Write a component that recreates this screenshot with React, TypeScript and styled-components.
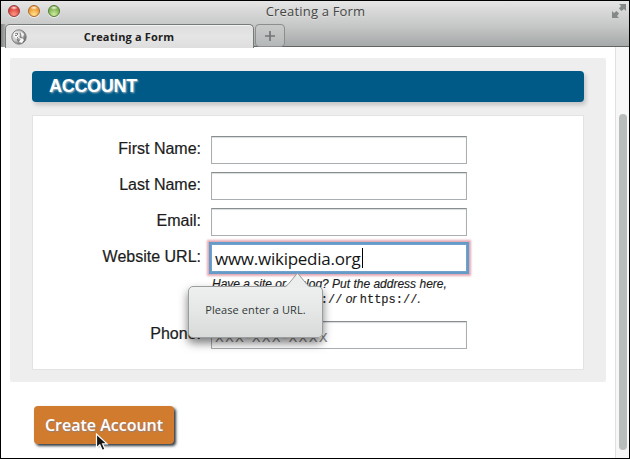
import React from "react";
import styled, { createGlobalStyle } from "styled-components";

const GlobalStyle = createGlobalStyle`
  *, *::before, *::after { box-sizing: border-box; }
  body { margin: 0; background: #fff; overflow: hidden; }
`;

const human = `"Open Sans", "Noto Sans", sans-serif`;
const arial = `"Liberation Sans", Arial, sans-serif`;

const BrowserWindow = styled.div`
  position: relative;
  width: 630px;
  height: 459px;
  border: 1px solid #000;
  display: flex;
  flex-direction: column;
  overflow: hidden;
  background: #fff;
  font-family: ${arial};
  color: #1c1c1c;
`;

const Chrome = styled.header`
  flex: none;
  height: 46px;
  display: flex;
  flex-direction: column;
  border-bottom: 1px solid #626464;
  background: linear-gradient(#e6e6e6 0, #d8d8d8 10px, #c6c7c7 25px, #a6a9a9 45px);
`;

const TitleBar = styled.div`
  height: 23px;
  flex: none;
  display: grid;
  grid-template-columns: 57px 1fr 60px;
  padding: 0 3px 0 7px;
`;

const Lights = styled.div`
  display: flex;
  gap: 8px;
  padding-top: 4px;
`;

const Light = styled.span<{ $edge: string; $fill: string; $glow: string }>`
  width: 12px;
  height: 12px;
  border-radius: 50%;
  border: 1px solid ${(p) => p.$edge};
  background: radial-gradient(ellipse 4px 2px at 50% 18%, #ffffffe8, #ffffff00),
    radial-gradient(circle at 50% 85%, ${(p) => p.$glow}, ${(p) => p.$fill} 65%);
  box-shadow: 0 1px 0 #eee;
`;

const Title = styled.div`
  font: 500 13px/21px ${human};
  color: #454545;
  white-space: nowrap;
  text-align: center;
  letter-spacing: 0.18px;
  text-shadow: 0 1px 0 #eeeeee90;
`;

const ExpandSlot = styled.div`
  display: flex;
  justify-content: flex-end;
  padding-top: 3px;
`;

const Tabs = styled.div`
  height: 23px;
  flex: none;
  display: flex;
  padding-left: 4px;
  background: linear-gradient(90deg, #858787 0, #a9abab 4px, transparent 5px);
`;

const Tab = styled.div`
  width: 249px;
  height: 24px;
  display: grid;
  grid-template-columns: 18px 1fr 24px;
  align-items: center;
  padding-left: 5px;
  border: 1px solid #777a7a;
  border-bottom: 0;
  border-radius: 5px 5px 0 0;
  background: linear-gradient(#dedede, #e5e5e5 50%, #dedede);
  box-shadow: inset 0 1px 0 #f4f4f4;
`;

const TabTitle = styled.span`
  font: bold 11px/22px ${human};
  letter-spacing: 0.18px;
  text-align: center;
  white-space: nowrap;
  color: #202020;
`;

const NewTab = styled.div`
  width: 30px;
  height: 23px;
  margin-left: 1px;
  display: flex;
  align-items: center;
  justify-content: center;
  border: 1px solid #8b8e8e;
  border-radius: 4px;
  background: linear-gradient(#c9cbcb, #b5b8b8);
`;

const Viewport = styled.div`
  flex: 1;
  min-height: 0;
  display: flex;
`;

const Page = styled.main`
  flex: 1;
  min-width: 0;
  padding: 11px 9px 0;
`;

const ScrollTrack = styled.div`
  width: 14px;
  padding: 67px 0 0 3px;
  background: #f7f7f7;
  border-left: 1px solid #e1e1e1;
`;

const ScrollThumb = styled.div`
  width: 8px;
  height: 336px;
  border-radius: 4px;
  background: #b8bcbb;
`;

const AccountForm = styled.form`
  display: block;
`;

const Fieldset = styled.section`
  width: 596px;
  height: 324px;
  padding: 13px 22px 0;
  border-radius: 2px;
  background: #eee;
`;

const Legend = styled.h1`
  margin: 0;
  height: 31px;
  padding-left: 17px;
  border-radius: 4px;
  background: #005a87;
  color: #fff;
  font: bold 18px/31px ${arial};
  letter-spacing: -0.3px;
  text-shadow: 1px 1px 2px #b2c2ca;
  box-shadow: 2px 3px 4px #0000002e;
`;

const Fields = styled.div`
  height: 255px;
  margin-top: 13px;
  padding: 20px 0 0;
  border: 1px solid #e3e3e3;
  background: #fff;
`;

const Row = styled.div<{ $gap?: number }>`
  display: grid;
  grid-template-columns: 168px 256px;
  column-gap: 10px;
  align-items: start;
  margin-bottom: ${(p) => p.$gap ?? 8}px;
`;

const Label = styled.label`
  font: 16px/25px ${arial};
  text-align: right;
  white-space: nowrap;
  -webkit-text-stroke: 0.2px #1c1c1c;
`;

const Control = styled.div`
  position: relative;
`;

const Input = styled.input<{ $focused?: boolean }>`
  display: block;
  width: 256px;
  height: 28px;
  margin: 0;
  padding: 0 3px;
  outline: none;
  border: 1px solid ${(p) => (p.$focused ? "#71a2cb" : "#aaaeb0")};
  border-top-color: ${(p) => (p.$focused ? "#71a2cb" : "#888d90")};
  border-radius: 0;
  background: #fff;
  color: #151515;
  font: 500 17px/26px ${human};
  letter-spacing: -0.25px;
  box-shadow: ${(p) =>
    p.$focused ? "0 0 0 2px #659bc8, 0 0 2px 4px #e3a9b3" : "inset 0 1px 1px #d9dcdc"};
  &::placeholder { color: #858585; opacity: 1; letter-spacing: 1.15px; }
`;

const Caret = styled.span`
  position: absolute;
  left: 151px;
  top: 4px;
  width: 1px;
  height: 20px;
  background: #000;
`;

const Hint = styled.p`
  margin: 0 0 0 178px;
  height: 49px;
  padding: 5px 0 0 1px;
  font: italic 12px/15px ${arial};
  white-space: nowrap;
  -webkit-text-stroke: 0.15px #1c1c1c;
  span { display: block; }
  code { font: 12px/15px "Liberation Mono", monospace; }
`;

const HintLead = styled.i`
  display: inline-block;
  width: 80px;
`;

const Bubble = styled.div`
  position: absolute;
  left: -23px;
  top: 42px;
  width: 135px;
  height: 52px;
  z-index: 2;
  border: 1px solid #9a9d9d;
  border-radius: 5px;
  background: linear-gradient(#edf0ef, #e5e8e6 45%, #d7dad9);
  box-shadow: 0 5px 10px #00000085;
  color: #333838;
  font: 500 11px/46px ${human};
  letter-spacing: 0.1px;
  text-align: center;
  white-space: nowrap;
`;

const BubbleArrow = styled.svg`
  position: absolute;
  left: 95px;
  top: -15px;
  display: block;
`;

const SubmitButton = styled.button`
  display: block;
  width: 140px;
  height: 38px;
  margin: 24px 0 0 24px;
  padding: 0;
  border: 0;
  border-radius: 4px;
  background: #d07b2e;
  color: #fff;
  font: 600 16px/38px ${human};
  white-space: nowrap;
  text-shadow: 1px 1px 1px #8f8482;
  box-shadow: 2px 2px 3px #303942;
`;

const Cursor = styled.svg`
  position: absolute;
  left: 94px;
  top: 432px;
`;

const lights = [
  { edge: "#963b39", fill: "#da403b", glow: "#ff9b88" },
  { edge: "#a9682b", fill: "#ed9935", glow: "#ffe58d" },
  { edge: "#567b3c", fill: "#7eb250", glow: "#d0eda0" },
];

const GlobeIcon = () => (
  <svg width="16" height="16" viewBox="0 0 16 16">
    <defs>
      <radialGradient id="globe" cx=".3" cy=".35" r=".75">
        <stop stopColor="#f5f5f5" />
        <stop offset=".55" stopColor="#c4c4c4" />
        <stop offset="1" stopColor="#555" />
      </radialGradient>
    </defs>
    <circle cx="8" cy="8" r="7.2" fill="url(#globe)" stroke="#858585" />
    <path d="M3 4 6 3l2 2-1 2 1 2-2 1-3-3zM10 3l3 2-1 3-2-2zM8 10l3-1 2 2-2 3-3-1z" fill="#f8f8f8" />
    <path d="m4 5 2-1 1 1-2 2-1-1m2 2 1 1v3m-1-2 2 3m1-9 1 2-1 2 2 1m-2 1-1 2" fill="none" stroke="#707070" strokeWidth=".9" />
  </svg>
);

export default function App() {
  return (
    <>
      <GlobalStyle />
      <BrowserWindow>
        <Chrome>
          <TitleBar>
            <Lights>
              {lights.map((l) => (
                <Light key={l.fill} $edge={l.edge} $fill={l.fill} $glow={l.glow} />
              ))}
            </Lights>
            <Title>Creating a Form</Title>
            <ExpandSlot>
              <svg width="14" height="14" viewBox="0 0 14 14">
                <path d="M7 0h7v7l-2-2-2.5 2L7 4.5 9 2zM0 7l2 2 2.5-2L7 9.5 5 12l2 2H0z" fill="#858888" />
              </svg>
            </ExpandSlot>
          </TitleBar>
          <Tabs>
            <Tab>
              <GlobeIcon />
              <TabTitle>Creating a Form</TabTitle>
            </Tab>
            <NewTab>
              <svg width="10" height="10" viewBox="0 0 10 10">
                <path d="M5 0v10M0 5h10" stroke="#727676" strokeWidth="1.7" />
              </svg>
            </NewTab>
          </Tabs>
        </Chrome>
        <Viewport>
          <Page>
            <AccountForm noValidate>
              <Fieldset>
                <Legend>ACCOUNT</Legend>
                <Fields>
                  <Row>
                    <Label htmlFor="first">First Name:</Label>
                    <Input id="first" />
                  </Row>
                  <Row>
                    <Label htmlFor="last">Last Name:</Label>
                    <Input id="last" />
                  </Row>
                  <Row>
                    <Label htmlFor="email">Email:</Label>
                    <Input id="email" />
                  </Row>
                  <Row $gap={0}>
                    <Label htmlFor="url">Website URL:</Label>
                    <Control>
                      <Input id="url" $focused defaultValue="www.wikipedia.org" />
                      <Caret />
                      <Bubble role="alert">
                        <BubbleArrow width="27" height="16" viewBox="0 0 27 16">
                          <path d="M0 16V15.5Q2 15 4 12.5L13.5 1 23 12.5Q25 15 27 15.5V16z" fill="#eceeed" />
                          <path d="M0 14.7Q2 14.5 4 12.5L13.5 1 23 12.5Q25 14.5 27 14.7" fill="none" stroke="#969999" />
                        </BubbleArrow>
                        Please enter a URL.
                      </Bubble>
                    </Control>
                  </Row>
                  <Hint>
                    <span>Have a site or a blog? Put the address here,</span>
                    <span>
                      <HintLead>including the</HintLead>
                      <code>http://</code> or <code>https://</code>.
                    </span>
                  </Hint>
                  <Row>
                    <Label htmlFor="phone">Phone:</Label>
                    <Input id="phone" placeholder="xxx-xxx-xxxx" />
                  </Row>
                </Fields>
              </Fieldset>
              <SubmitButton type="button">Create Account</SubmitButton>
            </AccountForm>
          </Page>
          <ScrollTrack>
            <ScrollThumb />
          </ScrollTrack>
        </Viewport>
        <Cursor width="14" height="19" viewBox="0 0 14 19">
          <path d="M1.5 1v14l3.3-3.2 2.5 5.6 2.7-1.2-2.4-5.3H12z" fill="#161616" stroke="#fff" strokeWidth="1.2" />
        </Cursor>
      </BrowserWindow>
    </>
  );
}
